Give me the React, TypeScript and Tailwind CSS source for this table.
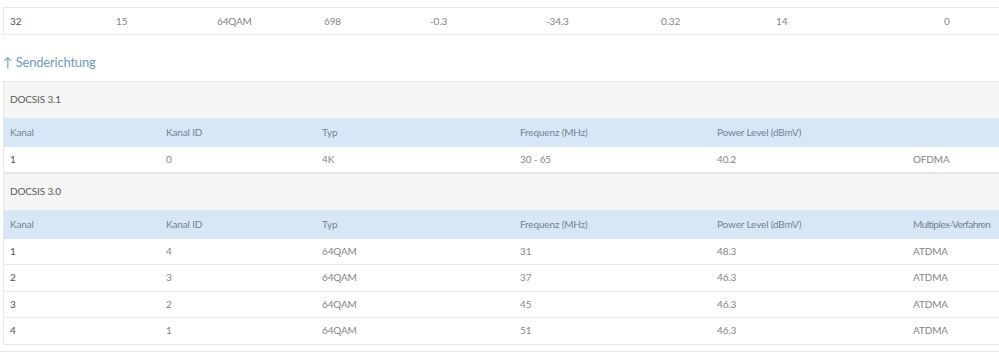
const topRow = ["32", "15", "64QAM", "698", "-0.3", "-34.3", "0.32", "14", "0"];
const topWidths = ["w-[106px]", "w-[101px]", "w-[107px]", "w-[106px]", "w-[116px]", "w-[115px]", "w-[115px]", "w-[168px]", "flex-1"];

const cols = ["w-[156px]", "w-[156px]", "w-[198px]", "w-[197px]", "w-[196px]", "flex-1"];
const headers = ["Kanal", "Kanal ID", "Typ", "Frequenz (MHz)", "Power Level (dBmV)"];

const rows30 = [
  ["1", "4", "64QAM", "31", "48.3", "ATDMA"],
  ["2", "3", "64QAM", "37", "46.3", "ATDMA"],
  ["3", "2", "64QAM", "45", "46.3", "ATDMA"],
  ["4", "1", "64QAM", "51", "46.3", "ATDMA"],
];

function HeaderRow({ last }: { last: string }) {
  return (
    <div className="flex h-[29px] items-center bg-[#d7e7f5] text-[#738393]">
      {[...headers, last].map((h, i) => (
        <div
          key={i}
          className={`${cols[i]} shrink-0 whitespace-nowrap pl-[6px] ${i === 5 ? "tracking-[-0.55px]" : ""}`}
        >
          {h}
        </div>
      ))}
    </div>
  );
}

function DataRow({ cells, h }: { cells: string[]; h: string }) {
  return (
    <div className={`flex ${h} items-center border-b border-[#e8e8e8] bg-white`}>
      {cells.map((c, i) => (
        <div key={i} className={`${cols[i]} shrink-0 pl-[6px] ${i === 0 ? "text-[#505050]" : "text-[#858585]"}`}>
          {c}
        </div>
      ))}
    </div>
  );
}

function SectionBar({ label }: { label: string }) {
  return (
    <div className="flex h-[37px] items-center border-t border-[#e4e4e4] bg-[#f5f5f5] pl-[6px] text-[#5a5a5a]">
      {label}
    </div>
  );
}

export default function App() {
  return (
    <div className="h-[363px] w-[999px] overflow-hidden bg-white font-['Lato','Open_Sans',sans-serif] text-[10px] tracking-[-0.15px]">
      <div className="ml-[3px] mt-[7px] flex h-[28px] items-center border-y border-l border-[#e8e8e8]">
        {topRow.map((c, i) => (
          <div key={i} className={`${topWidths[i]} shrink-0 pl-[6px] ${i === 0 ? "text-[#505050]" : "text-[#858585]"}`}>
            {c}
          </div>
        ))}
      </div>

      <div className="ml-[3px] mt-[18px] text-[13px] tracking-[-0.2px] text-[#6a9cc3]">↑ Senderichtung</div>

      <div className="ml-[3px] mt-[8px] border-l border-[#e8e8e8]">
        <SectionBar label="DOCSIS 3.1" />
        <HeaderRow last="" />
        <DataRow cells={["1", "0", "4K", "30 - 65", "40.2", "OFDMA"]} h="h-[26px]" />
        <SectionBar label="DOCSIS 3.0" />
        <HeaderRow last="Multiplex-Verfahren" />
        {rows30.map((r, i) => (
          <DataRow key={i} cells={r} h="h-[26.5px]" />
        ))}
      </div>
      <div className="mt-[6px] border-t border-[#e8e8e8]" />
    </div>
  );
}
